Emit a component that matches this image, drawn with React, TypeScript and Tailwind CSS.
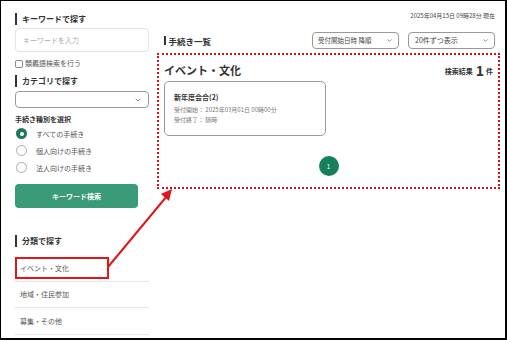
import { ChevronDown } from "lucide-react";

function SectionTitle({ label, size = "text-[8px]" }: { label: string; size?: string }) {
  return (
    <div className="flex items-center h-[12px]">
      <div className="w-[2px] h-[12px] bg-[#333]" />
      <span className={`ml-[5px] ${size} font-bold text-[#333] leading-[12px]`}>{label}</span>
    </div>
  );
}

function Radio({ label, checked }: { label: string; checked?: boolean }) {
  return (
    <div className="flex items-center h-[17px]">
      {checked ? (
        <div className="w-[11px] h-[11px] rounded-full bg-[#1d7a57] flex items-center justify-center">
          <div className="w-[4px] h-[4px] rounded-full bg-white" />
        </div>
      ) : (
        <div className="w-[11px] h-[11px] rounded-full border border-[#aaa] bg-white" />
      )}
      <span className="ml-[9px] text-[7px] text-[#555] leading-[10px]">{label}</span>
    </div>
  );
}

export default function App() {
  const categories = ["イベント・文化", "地域・住民参加", "募集・その他"];

  return (
    <div className="relative w-[507px] h-[340px] bg-white border-t border-l border-r-2 border-b-2 border-black overflow-hidden font-['Noto_Sans_CJK_JP','Noto_Sans',sans-serif] text-[#333]">
      <div className="flex">
        {/* Sidebar */}
        <div className="w-[148px] pl-[14px] shrink-0">
          <div className="mt-[12px]">
            <SectionTitle label="キーワードで探す" />
          </div>
          <div className="mt-[3px] h-[24px] rounded-[4px] border border-[#e2e2e2] flex items-center px-[7px]">
            <span className="text-[7px] text-[#aaa]">キーワードを入力</span>
          </div>
          <div className="mt-[7px] flex items-center h-[9px]">
            <div className="w-[8px] h-[8px] rounded-[2px] border border-[#888] bg-white" />
            <span className="ml-[2px] text-[7px] text-[#555] leading-[9px]">類義語検索を行う</span>
          </div>
          <div className="mt-[7px]">
            <SectionTitle label="カテゴリで探す" />
          </div>
          <div className="mt-[4px] h-[17px] rounded-[4px] border border-[#999] flex items-center justify-end pr-[6px]">
            <ChevronDown className="w-[8px] h-[8px] text-[#555]" strokeWidth={2} />
          </div>
          <div className="mt-[6px] text-[7px] font-bold leading-[10px]">手続き種別を選択</div>
          <div className="mt-[1px] pl-[1px]">
            <Radio label="すべての手続き" checked />
            <Radio label="個人向けの手続き" />
            <Radio label="法人向けの手続き" />
          </div>
          <div className="mt-[8px] w-[123px] h-[24px] rounded-[4px] bg-[#3a9b78] flex items-center justify-center">
            <span className="text-[7px] font-bold text-white">キーワード検索</span>
          </div>
          <div className="mt-[27px]">
            <SectionTitle label="分類で探す" />
          </div>
          <div className="mt-[8px]">
            {categories.map((c) => (
              <div key={c} className="h-[26.5px] border-b border-[#e6e6e6] flex items-center pl-[5px]">
                <span className="text-[7px] text-[#555]">{c}</span>
              </div>
            ))}
          </div>
        </div>

        {/* Main */}
        <div className="ml-[8px] w-[343px]">
          <div className="mt-[11px] pr-[5px] text-right text-[6px] leading-[8px] text-[#444]">
            2025年04月15日 09時28分 現在
          </div>
          <div className="mt-[12px] flex items-center justify-between pl-[7px] pr-[5px]">
            <div className="flex items-center">
              <div className="w-[1.5px] h-[9px] bg-[#333]" />
              <span className="ml-[3px] text-[8.5px] font-bold leading-[12px]">手続き一覧</span>
            </div>
            <div className="flex gap-[9px]">
              <div className="w-[87px] h-[17px] rounded-[4px] border border-[#999] flex items-center justify-between pl-[5px] pr-[5px]">
                <span className="text-[6.5px] text-[#444]">受付開始日時 降順</span>
                <ChevronDown className="w-[7px] h-[7px] text-[#555]" strokeWidth={2} />
              </div>
              <div className="w-[87px] h-[17px] rounded-[4px] border border-[#999] flex items-center justify-between pl-[6px] pr-[5px]">
                <span className="text-[7px] text-[#444]">20件ずつ表示</span>
                <ChevronDown className="w-[7px] h-[7px] text-[#555]" strokeWidth={2} />
              </div>
            </div>
          </div>

          <div className="mt-[4px] h-[136px] border-2 border-dotted border-[#d40f16] pt-[8px] pl-[5px] pr-[5px]">
            <div className="flex items-end justify-between h-[14px]">
              <span className="text-[11px] font-bold leading-[14px]">イベント・文化</span>
              <span className="flex items-end font-bold leading-[12px]">
                <span className="text-[7px]">検索結果</span>
                <span className="ml-[3px] text-[14px] leading-[14px]">1</span>
                <span className="ml-[2px] text-[7px]">件</span>
              </span>
            </div>
            <div className="mt-[4px] w-[162px] h-[55px] rounded-[5px] border border-[#999] pt-[10px] pl-[9px]">
              <div className="text-[7px] font-bold leading-[10px]">新年度会合(2)</div>
              <div className="mt-[2.5px] text-[6px] text-[#777] leading-[10px]">受付開始： 2025年03月01日 00時00分</div>
              <div className="text-[6px] text-[#777] leading-[10px]">受付終了： 随時</div>
            </div>
            <div className="mt-[20px] flex justify-center">
              <div className="w-[20px] h-[20px] rounded-full bg-[#16805d] flex items-center justify-center">
                <span className="text-[6px] text-white">1</span>
              </div>
            </div>
          </div>
        </div>
      </div>

      {/* Annotation overlays */}
      <div className="absolute left-[14px] top-[256px] w-[94px] h-[22px] border-[2.5px] border-[#e0161b]" />
      <svg className="absolute left-0 top-0" width="507" height="340" viewBox="0 0 507 340">
        <line x1="107" y1="266" x2="166" y2="195" stroke="#e0161b" strokeWidth="2" />
        <polygon points="171,188 168,200 160,193" fill="#e0161b" />
      </svg>
    </div>
  );
}
